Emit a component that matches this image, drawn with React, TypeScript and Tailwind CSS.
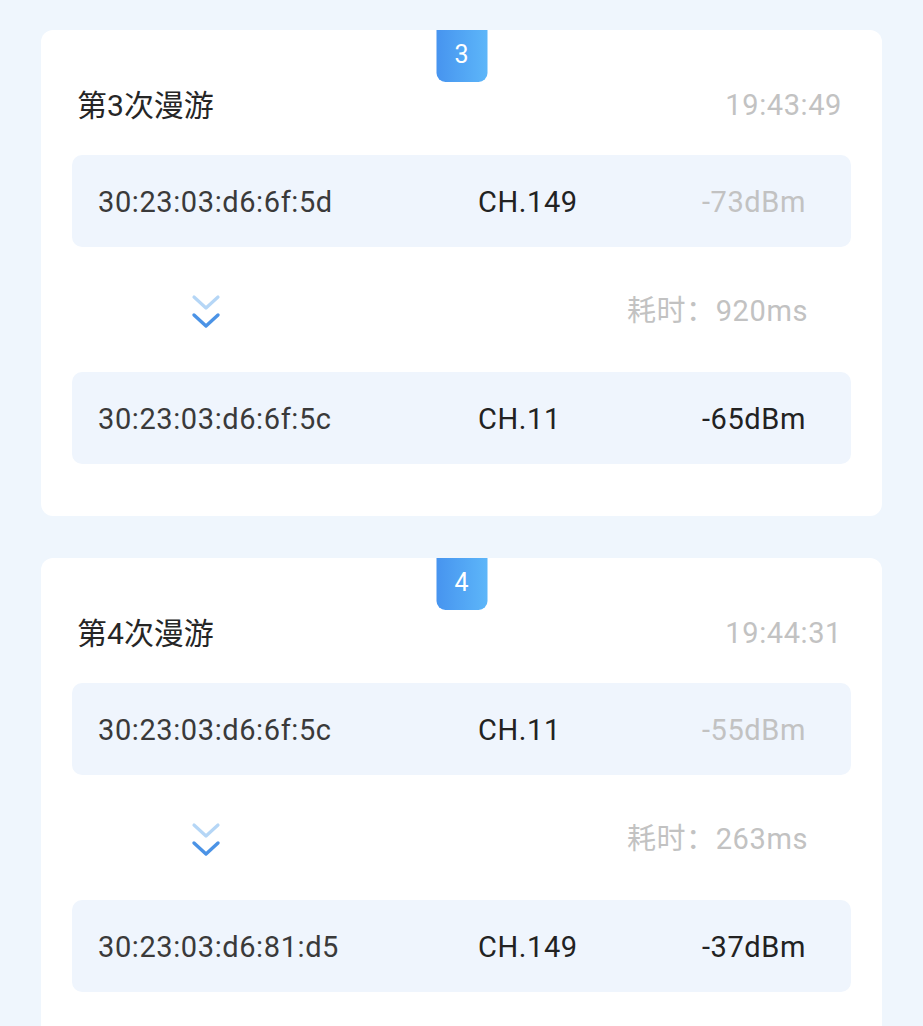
import React from "react";

type Ap = { mac: string; ch: string; dbm: string };
type Roam = { n: number; time: string; from: Ap; to: Ap; cost: string };

const data: Roam[] = [
  {
    n: 3,
    time: "19:43:49",
    from: { mac: "30:23:03:d6:6f:5d", ch: "CH.149", dbm: "-73dBm" },
    to: { mac: "30:23:03:d6:6f:5c", ch: "CH.11", dbm: "-65dBm" },
    cost: "920ms",
  },
  {
    n: 4,
    time: "19:44:31",
    from: { mac: "30:23:03:d6:6f:5c", ch: "CH.11", dbm: "-55dBm" },
    to: { mac: "30:23:03:d6:81:d5", ch: "CH.149", dbm: "-37dBm" },
    cost: "263ms",
  },
];

const font = { fontFamily: 'Roboto, "Noto Sans CJK SC", sans-serif' };

function ApRow({ ap, weak }: { ap: Ap; weak: boolean }) {
  return (
    <div className="flex h-[92px] items-center rounded-[10px] bg-[#eff5fd] pl-[26px] pr-[45px] pt-[4px] text-[29px] tracking-[0.6px]">
      <div className="w-[380px] text-[#3a3a3a]">{ap.mac}</div>
      <div className="flex-1 text-[#222222]">{ap.ch}</div>
      <div className={weak ? "text-[#c2c2c2]" : "text-[#222222]"}>{ap.dbm}</div>
    </div>
  );
}

function Chevrons() {
  return (
    <svg width="32" height="44" viewBox="0 0 32 44" fill="none">
      <path d="M4 8 L16 19 L28 8" stroke="#b5d6f6" strokeWidth="3.2" strokeLinecap="round" strokeLinejoin="round" />
      <path d="M4 26 L16 37 L28 26" stroke="#4b93e6" strokeWidth="3.4" strokeLinecap="round" strokeLinejoin="round" />
    </svg>
  );
}

function Card({ r }: { r: Roam }) {
  return (
    <div className="relative rounded-[12px] bg-white px-[31px] pb-[52px] pt-[54px]">
      <div className="absolute left-1/2 top-0 flex h-[52px] w-[51px] -translate-x-1/2 items-center justify-center rounded-b-[9px] bg-gradient-to-r from-[#4794ef] to-[#5db6f9] pb-[3px] text-[25px] text-white">
        {r.n}
      </div>
      <div className="flex h-[40px] items-center justify-between pl-[5px] pr-[9px] pt-[3px]">
        <div className="text-[30px] text-[#262626]">第{r.n}次漫游</div>
        <div className="text-[29px] tracking-[0.6px] text-[#c2c2c2]">{r.time}</div>
      </div>
      <div className="mt-[31px]">
        <ApRow ap={r.from} weak={true} />
      </div>
      <div className="flex h-[125px] items-center pr-[43px]">
        <div className="w-[266px] pl-[118px] pt-[2px]">
          <Chevrons />
        </div>
        <div className="flex-1 pt-[4px] text-right text-[29px] tracking-[0.6px] text-[#c2c2c2]">耗时：{r.cost}</div>
      </div>
      <ApRow ap={r.to} weak={false} />
    </div>
  );
}

export default function App() {
  return (
    <div className="min-h-[1026px] bg-[#eff6fd] px-[41px] pt-[30px]" style={font}>
      <div className="flex flex-col gap-[42px]">
        {data.map((r) => (
          <Card key={r.n} r={r} />
        ))}
      </div>
    </div>
  );
}
